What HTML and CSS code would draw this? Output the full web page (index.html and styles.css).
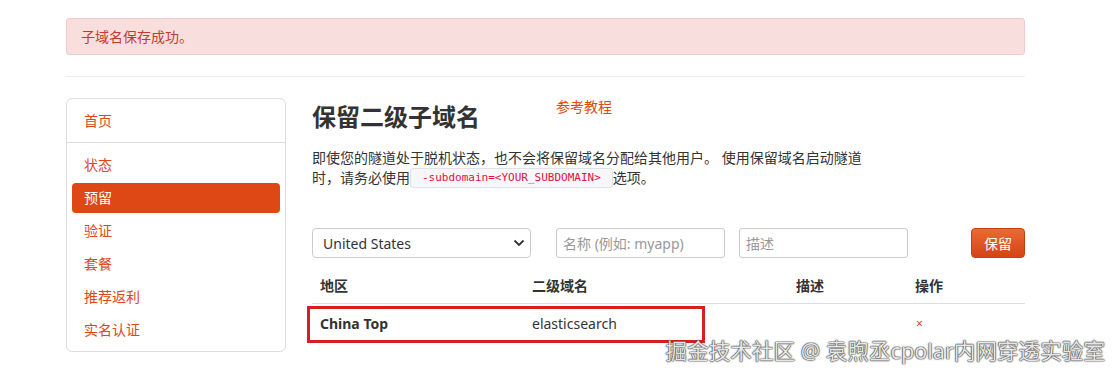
FILE: index.html
```html
<!DOCTYPE html>
<html lang="zh-CN">
  <head>
    <meta charset="UTF-8" />
    <meta name="viewport" content="width=device-width, initial-scale=1.0" />
    <title>保留二级子域名</title>
    <link rel="stylesheet" href="styles.css">
  </head>

  <body>
    <div class="page">
      <div class="alert">子域名保存成功。</div>
      <hr class="divider" />

      <div class="layout">
        <nav class="sidebar">
          <a class="nav-home" href="#">首页</a>
          <ul class="nav-list">
            <li><a href="#">状态</a></li>
            <li class="active"><a href="#">预留</a></li>
            <li><a href="#">验证</a></li>
            <li><a href="#">套餐</a></li>
            <li><a href="#">推荐返利</a></li>
            <li><a href="#">实名认证</a></li>
          </ul>
        </nav>

        <main class="content">
          <div class="heading">
            <h2>保留二级子域名</h2>
            <a class="tutorial" href="#">参考教程</a>
          </div>

          <p class="desc">
            即使您的隧道处于脱机状态，也不会将保留域名分配给其他用户。 使用保留域名启动隧道时，请务必使用<code>-subdomain=&lt;YOUR_SUBDOMAIN&gt;</code>选项。
          </p>

          <form class="reserve-form">
            <span class="select-wrap">
              <select class="region">
                <option>United States</option>
                <option>China Top</option>
              </select>
              <svg class="chevron" width="12" height="8" viewBox="0 0 12 8">
                <path d="M1.5 1.5 L6 6 L10.5 1.5" fill="none" stroke="#333" stroke-width="1.8" />
              </svg>
            </span>
            <input class="field name" type="text" placeholder="名称 (例如: myapp)" />
            <input class="field note" type="text" placeholder="描述" />
            <button class="btn-reserve" type="button">保留</button>
          </form>

          <div class="table-wrap">
            <table class="tunnels">
              <thead>
                <tr>
                  <th class="col-region">地区</th>
                  <th class="col-domain">二级域名</th>
                  <th class="col-desc">描述</th>
                  <th class="col-op">操作</th>
                </tr>
              </thead>
              <tbody>
                <tr>
                  <td class="strong">China Top</td>
                  <td>elasticsearch</td>
                  <td></td>
                  <td><a class="remove" href="#">×</a></td>
                </tr>
              </tbody>
            </table>
            <div class="highlight"></div>
          </div>
        </main>
      </div>
    </div>

    <div class="watermark">掘金技术社区 @ 袁煦丞cpolar内网穿透实验室</div>
  </body>
</html>
```

FILE: styles.css
```css
body {
  margin: 0;
  padding: 0;
  background: #fff;
  color: #333;
  font-family: "Noto Sans", "Noto Sans CJK SC", sans-serif;
  font-size: 14px;
}

.page {
  width: 959px;
  margin-left: 66px;
  padding-top: 18px;
}

/* Alert */
.alert {
  background: #f9dede;
  border: 1px solid #f0ccd1;
  border-radius: 3px;
  color: #c33a2f;
  padding: 8px 14px;
  line-height: 19px;
}

.divider {
  border: none;
  border-top: 1px solid #eee;
  margin: 21px 0 0;
}

.layout {
  display: flex;
  gap: 26px;
  margin-top: 21px;
}

/* Sidebar */
.sidebar {
  width: 220px;
  box-sizing: border-box;
  border: 1px solid #ddd;
  border-radius: 6px;
  align-self: flex-start;
}

.sidebar a {
  color: #dd4814;
  text-decoration: none;
}

.nav-home {
  display: block;
  height: 43px;
  line-height: 43px;
  padding-left: 17px;
  border-bottom: 1px solid #ddd;
}

.nav-list {
  list-style: none;
  margin: 0;
  padding: 7px 5px 6px;
  display: flex;
  flex-direction: column;
  gap: 3px;
}

.nav-list a {
  display: block;
  height: 30px;
  line-height: 30px;
  padding-left: 12px;
  border-radius: 4px;
}

.nav-list .active a {
  background: #dd4814;
  color: #fff;
}

/* Content */
.content {
  width: 713px;
}

.heading {
  display: flex;
  margin-top: 4px;
}

.heading h2 {
  margin: 0;
  font-size: 24px;
  line-height: 30px;
  font-weight: 700;
  color: #333;
}

.tutorial {
  color: #dd4814;
  text-decoration: none;
  line-height: 18px;
  margin-top: -4px;
  margin-left: 76px;
  align-self: flex-start;
}

.desc {
  width: 556px;
  margin: 16px 0 0;
  line-height: 20px;
}

.desc code {
  display: inline-block;
  vertical-align: top;
  font-family: "DejaVu Sans Mono", "Liberation Mono", monospace;
  font-size: 11px;
  line-height: 16px;
  color: #d14;
  background: #f7f7f9;
  border: 1px solid #e1e1e8;
  border-radius: 3px;
  padding: 1px 11px;
}

/* Form */
.reserve-form {
  display: flex;
  align-items: center;
  margin-top: 40px;
  height: 30px;
}

.select-wrap {
  position: relative;
  display: block;
}

.region {
  appearance: none;
  width: 219px;
  height: 30px;
  border: 1px solid #ccc;
  border-radius: 4px;
  background: #fff;
  color: #333;
  font-family: inherit;
  font-size: 14px;
  padding: 0 10px;
}

.chevron {
  position: absolute;
  right: 6px;
  top: 11px;
}

.field {
  width: 169px;
  height: 30px;
  box-sizing: border-box;
  border: 1px solid #ccc;
  border-radius: 3px;
  padding: 0 6px;
  font-family: inherit;
  font-size: 14px;
  color: #333;
}

.field::placeholder {
  color: #999;
}

.name {
  margin-left: 25px;
}

.note {
  margin-left: 14px;
}

.btn-reserve {
  margin-left: 63px;
  width: 54px;
  height: 30px;
  border: 1px solid #c9400f;
  border-radius: 4px;
  background: linear-gradient(#ea6a35, #d44414);
  color: #fff;
  font-family: inherit;
  font-size: 14px;
  padding: 0;
}

/* Table */
.table-wrap {
  position: relative;
  margin-top: 10px;
}

.tunnels {
  width: 100%;
  border-collapse: collapse;
}

.tunnels th {
  text-align: left;
  font-weight: 700;
  padding: 8px 8px 7px;
  line-height: 20px;
  border-bottom: 1px solid #ddd;
}

.tunnels td {
  padding: 9px 8px;
  line-height: 20px;
}

.col-region {
  width: 196px;
}

.col-domain {
  width: 248px;
}

.col-desc {
  width: 103px;
}

.strong {
  font-weight: 700;
}

.remove {
  color: #dd4814;
  text-decoration: none;
  font-size: 12px;
  padding-left: 1px;
}

.highlight {
  position: absolute;
  left: -5px;
  top: 38px;
  width: 398px;
  height: 37px;
  box-sizing: border-box;
  border: 3px solid #d81e1e;
}

/* Watermark */
.watermark {
  position: absolute;
  right: 12px;
  top: 338px;
  font-size: 21.6px;
  line-height: 26px;
  color: #e6e6e6;
  text-shadow: 0 0 1px #333, 0 0 1px #333, 0 0 2px #555;
}
```
